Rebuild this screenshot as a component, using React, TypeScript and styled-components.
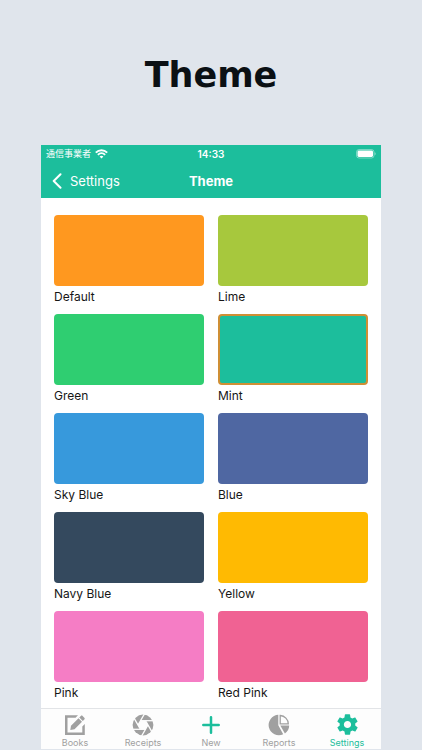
import React from "react";
import styled, { createGlobalStyle } from "styled-components";
import { IoMdSettings } from "react-icons/io";

const MINT = "#1cbe9c";

const GlobalStyle = createGlobalStyle`
  * { box-sizing: border-box; }
  body {
    margin: 0;
    background: #e0e5ec;
    font-family: Inter, "Noto Sans CJK JP", sans-serif;
    color: #161616;
  }
  button {
    border: 0;
    padding: 0;
    margin: 0;
    background: none;
    font: inherit;
    color: inherit;
    cursor: pointer;
  }
`;

const Page = styled.main`
  min-height: 100vh;
  display: flex;
  flex-direction: column;
  padding: 0 41px 1px;
`;

const PageTitle = styled.h1`
  margin: 0;
  padding: 53px 0 47px;
  text-align: center;
  font: bold 35px/45px "DejaVu Sans", sans-serif;
  color: #0b1014;
`;

const Phone = styled.section`
  flex: 1;
  display: flex;
  flex-direction: column;
  background: #fff;
`;

const Header = styled.header`
  background: ${MINT};
  color: #fff;
`;

const ThreeColumns = styled.div`
  display: grid;
  grid-template-columns: 1fr auto 1fr;
  align-items: center;
`;

const StatusBar = styled(ThreeColumns)`
  height: 18px;
  padding: 0 5px;
  font-size: 10px;
  line-height: 18px;
`;

const Carrier = styled.span`
  display: flex;
  align-items: center;
  gap: 4px;
  font-size: 9px;
`;

const Clock = styled.span`
  font-weight: 600;
`;

const Battery = styled.svg`
  justify-self: end;
`;

const NavBar = styled(ThreeColumns)`
  height: 35px;
  padding: 0 11px;
  font-size: 13px;
  line-height: 34px;
`;

const BackButton = styled.button`
  display: flex;
  align-items: center;
  justify-self: start;
  gap: 8px;
`;

const NavTitle = styled.h2`
  margin: 0;
  font-size: 13px;
  font-weight: 700;
`;

const Swatches = styled.div`
  flex: 1;
  display: grid;
  grid-template-columns: 1fr 1fr;
  gap: 6px 14px;
  align-content: start;
  padding: 17px 13px 0;
`;

const SwatchButton = styled.button`
  text-align: left;
  font-size: 12px;
  line-height: 22px;
`;

const Colour = styled.span<{ $fill: string; $selected: boolean }>`
  display: block;
  height: 71px;
  border-radius: 4px;
  background: ${(p) => p.$fill};
  border: ${(p) => (p.$selected ? "2px solid #cf8f35" : "0")};
`;

const SwatchName = styled.span`
  display: block;
`;

const TabBar = styled.nav`
  display: grid;
  grid-template-columns: repeat(5, 1fr);
  height: 41px;
  border-top: 1px solid #e2e4e7;
  background: #fdfdfd;
`;

const TabButton = styled.button<{ $active: boolean }>`
  display: flex;
  flex-direction: column;
  align-items: center;
  padding-top: 3px;
  font-size: 9px;
  line-height: 12px;
  color: ${(p) => (p.$active ? MINT : "#a0a0a0")};
`;

const TabIcon = styled.span<{ $tint: string }>`
  display: flex;
  align-items: center;
  justify-content: center;
  height: 25px;
  color: ${(p) => p.$tint};
`;

const WifiIcon = () => (
  <svg width="13" height="10" viewBox="0 0 13 10" fill="none" stroke="currentColor" strokeWidth="1.9" aria-label="Wi-Fi">
    <path d="M.8 3.6C4 .4 9 .4 12.2 3.6M2.9 5.8c2-2 5.200-2 7.200 0" />
    <path d="M6.500 9.400 4.600 7.500c1-.9 2.800-.9 3.800 0z" fill="currentColor" stroke="none" />
  </svg>
);

const BatteryIcon = () => (
  <Battery width="20" height="10" viewBox="0 0 20 10" aria-label="Battery full">
    <rect x=".5" y=".5" width="17.500" height="8.500" rx="2.500" fill="none" stroke="#fff" strokeOpacity=".4" />
    <rect x="1.500" y="1.500" width="15.500" height="6.500" rx="1.400" fill="#fff" />
    <path d="M18.800 3.200v3.100c1-.4 1-2.700 0-3.100z" fill="#fff" fillOpacity=".6" />
  </Battery>
);

const ChevronIcon = () => (
  <svg width="10" height="16" viewBox="0 0 10 16" fill="none" stroke="currentColor" strokeWidth="2" strokeLinecap="round" strokeLinejoin="round">
    <path d="M8.500 1.200 1.700 8l6.800 6.800" />
  </svg>
);

const BooksIcon = () => (
  <svg width="22" height="22" viewBox="0 0 22 22" fill="currentColor">
    <path d="M14 1.200H1v19.800h19.800V10l-2.500 2.500v6H3.500V3.700h8z" />
    <path d="m7 11.800 7.500-7.500 3.500 3.500-7.500 7.500-4.200.7z" />
    <path d="m15.300 3.500 1.500-1.500c.6-.6 1.200-.6 1.800 0l1.700 1.700c.6.6.6 1.200 0 1.800l-1.500 1.500z" />
  </svg>
);

const bladeAngles = [0, 60, 120, 180, 240, 300];

const ApertureIcon = () => (
  <svg width="22" height="22" viewBox="-11 -11 22 22">
    <circle r="10.400" fill="currentColor" />
    <path d="M-2.500-4.300h5L5 0 2.500 4.300h-5L-5 0z" fill="#fdfdfd" />
    {bladeAngles.map((angle) => (
      <path key={angle} d="M-2.500-4.300H11" transform={`rotate(${angle})`} stroke="#fdfdfd" strokeWidth="1.300" />
    ))}
  </svg>
);

const PlusIcon = () => (
  <svg width="18" height="18" viewBox="0 0 18 18" stroke="currentColor" strokeWidth="2.500" strokeLinecap="round">
    <path d="M9 1.300v15.400M1.300 9h15.400" />
  </svg>
);

const ReportsIcon = () => (
  <svg width="22" height="22" viewBox="0 0 22 22" fill="currentColor">
    <path d="M10.300.8v10.400l4.900 9A10.200 10.200 0 1 1 10.300.8z" />
    <path d="M12.200 1.500v8.400h8.100a8.500 8.500 0 0 0-8.100-8.400z" fill="none" stroke="currentColor" strokeWidth="1.300" />
    <path d="M12.300 11.600h8.900c0 3.100-1.500 6-4.300 7.800z" />
  </svg>
);

const themes = [
  { name: "Default", fill: "#ff981f" },
  { name: "Lime", fill: "#a7c83d" },
  { name: "Green", fill: "#2fce71" },
  { name: "Mint", fill: MINT },
  { name: "Sky Blue", fill: "#3799dc" },
  { name: "Blue", fill: "#4f67a2" },
  { name: "Navy Blue", fill: "#34495e" },
  { name: "Yellow", fill: "#ffba02" },
  { name: "Pink", fill: "#f57dc5" },
  { name: "Red Pink", fill: "#f06293" },
];

const tabs = [
  { name: "Books", icon: <BooksIcon />, tint: "#a0a0a0" },
  { name: "Receipts", icon: <ApertureIcon />, tint: "#a0a0a0" },
  { name: "New", icon: <PlusIcon />, tint: MINT },
  { name: "Reports", icon: <ReportsIcon />, tint: "#a0a0a0" },
  { name: "Settings", icon: <IoMdSettings size={25} />, tint: MINT },
];

export default function App() {
  const [selected, setSelected] = React.useState("Mint");
  return (
    <>
      <GlobalStyle />
      <Page>
        <PageTitle>Theme</PageTitle>
        <Phone>
          <Header>
            <StatusBar>
              <Carrier>
                通信事業者
                <WifiIcon />
              </Carrier>
              <Clock>14:33</Clock>
              <BatteryIcon />
            </StatusBar>
            <NavBar>
              <BackButton type="button">
                <ChevronIcon />
                Settings
              </BackButton>
              <NavTitle>Theme</NavTitle>
            </NavBar>
          </Header>
          <Swatches>
            {themes.map((t) => (
              <SwatchButton
                key={t.name}
                type="button"
                aria-pressed={t.name === selected}
                onClick={() => setSelected(t.name)}
              >
                <Colour $fill={t.fill} $selected={t.name === selected} />
                <SwatchName>{t.name}</SwatchName>
              </SwatchButton>
            ))}
          </Swatches>
          <TabBar>
            {tabs.map((t) => (
              <TabButton key={t.name} type="button" $active={t.name === "Settings"}>
                <TabIcon $tint={t.tint}>{t.icon}</TabIcon>
                {t.name}
              </TabButton>
            ))}
          </TabBar>
        </Phone>
      </Page>
    </>
  );
}
